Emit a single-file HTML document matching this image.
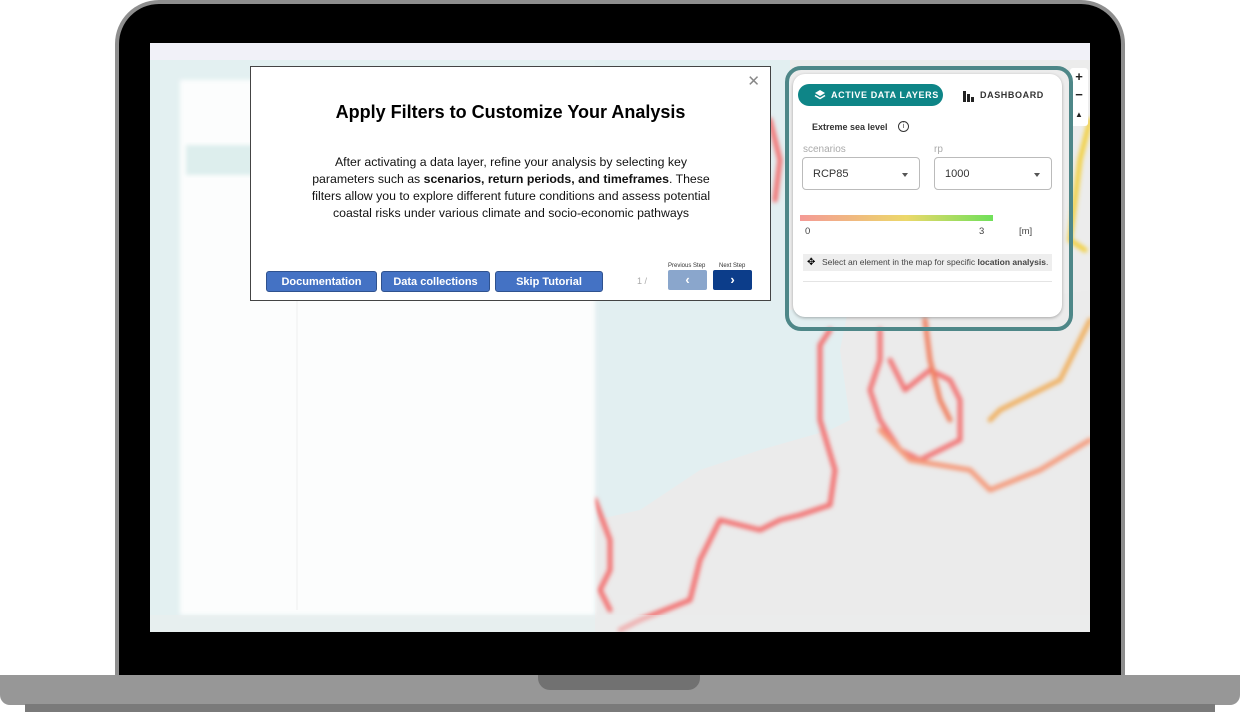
<!DOCTYPE html>
<html><head><meta charset="utf-8"><style>
*{margin:0;padding:0;box-sizing:border-box}
body{width:1240px;height:712px;background:#fff;position:relative;overflow:hidden;font-family:"Liberation Sans",sans-serif}
.abs{position:absolute}
.frame{left:115px;top:0;width:1010px;height:690px;background:#8e8e8e;border-radius:44px 44px 0 0}
.bezel{left:119px;top:4px;width:1002px;height:686px;background:#000;border-radius:40px 40px 0 0}
.screen{left:150px;top:43px;width:940px;height:589px;background:#e3f0f1;overflow:hidden}
.base{left:0;top:675px;width:1240px;height:30px;background:#979797;border-radius:0 0 10px 10px}
.base2{left:25px;top:704px;width:1190px;height:8px;background:#7a7a7a}
.notch{left:538px;top:675px;width:162px;height:15px;background:#717171;border-radius:0 0 12px 12px}
.modal{left:250px;top:66px;width:521px;height:235px;background:#fff;border:1px solid #444}
.btn{position:absolute;top:204px;height:21px;background:#4472c4;border:1px solid #2f528f;border-radius:3px;color:#fff;font-weight:bold;font-size:11px;text-align:center;line-height:21px;font-family:"Liberation Sans",sans-serif}
.panel{left:785px;top:66px;width:288px;height:265px;border:4px solid #4e8788;border-radius:16px}
.card{left:793px;top:74px;width:269px;height:243px;background:#fff;border-radius:12px;box-shadow:0 1px 3px rgba(0,0,0,.3)}
.sel{position:absolute;top:157px;height:33px;border:1px solid #bbb;border-radius:4px;font-size:11px;color:#333;padding:10px 0 0 10px}
.sel:after{content:"";position:absolute;right:11px;top:15px;border:3.5px solid transparent;border-top:4px solid #555}
</style></head><body>
<div class="abs frame"></div>
<div class="abs bezel"></div>
<div class="abs screen">
  <div class="abs" style="left:0;top:0;width:940px;height:17px;background:#f1f1f8"></div>
  <svg class="abs" style="left:0;top:0" width="940" height="589" viewBox="150 43 940 589">
    <defs><filter id="b" x="-10%" y="-10%" width="120%" height="120%"><feGaussianBlur stdDeviation="2"/></filter></defs>
    <rect x="595" y="60" width="495" height="572" fill="#e2eff1"/>
    <path d="M595 520 L640 510 L700 470 L760 450 L830 430 L850 420 L840 350 L850 300 L900 290 L980 300 L1000 280 L1090 270 L1090 632 L595 632Z" fill="#ebebeb"/>
    <path d="M880 300 L960 290 L1020 300 L1090 290 L1090 60 L790 60 L790 310Z" fill="#ececec"/>
    <g fill="none" stroke-width="5" filter="url(#b)" stroke-linecap="round" stroke-linejoin="round">
      <path d="M830 330 L820 345 L820 420 L835 470 L830 505 L800 515 L780 520 L760 530 L720 520 L700 560 L690 600 L640 620 L620 630" stroke="#f37070"/>
      <path d="M595 500 L610 540 L610 570 L600 590 L610 610" stroke="#f37070"/>
      <path d="M880 330 L880 360 L870 390 L880 420 L900 450 L920 460 L960 440 L960 400 L950 380 L930 370 L905 390 L890 360" stroke="#f27575"/>
      <path d="M880 430 L910 460 L970 470 L990 490 L1040 470 L1090 440" stroke="#f59a7a"/>
      <path d="M925 320 L930 360 L940 400 L950 420" stroke="#f08060"/>
      <path d="M1090 320 L1060 380 L1040 390 L1000 410 L990 420" stroke="#f0b060"/>
      <path d="M1090 120 L1080 160 L1070 240 L1085 250" stroke="#f2d040"/>
      <path d="M770 120 L780 160 L775 200" stroke="#f37070"/>
    </g>
    <rect x="180" y="80" width="415" height="535" fill="#fcfdfd" filter="url(#b)"/>
    <rect x="186" y="145" width="100" height="30" fill="#ddeeed" filter="url(#b)"/>
    <line x1="297" y1="95" x2="297" y2="610" stroke="#eeeeee"/>
  </svg>
  <div class="abs" style="left:0;top:572px;width:940px;height:17px;background:rgba(235,238,238,.5)"></div>
</div>

<div class="abs modal">
  <div class="abs" style="right:10px;top:5px;font-size:15px;color:#888">✕</div>
  <div class="abs" style="left:0;width:519px;top:35px;text-align:center;font-size:18px;font-weight:bold;color:#000">Apply Filters to Customize Your Analysis</div>
  <div class="abs" style="left:38px;width:444px;top:87px;text-align:center;font-size:12.3px;line-height:17px;color:#111">After activating a data layer, refine your analysis by selecting key<br>parameters such as <b>scenarios, return periods, and timeframes</b>. These<br>filters allow you to explore different future conditions and assess potential<br>coastal risks under various climate and socio-economic pathways</div>
  <div class="btn" style="left:15px;width:111px">Documentation</div>
  <div class="btn" style="left:130px;width:109px">Data collections</div>
  <div class="btn" style="left:244px;width:108px">Skip Tutorial</div>
  <div class="abs" style="left:386px;top:209px;font-size:9px;color:#aaa">1 /</div>
  <div class="abs" style="left:417px;top:196px;font-size:6px;color:#333">Previous Step</div>
  <div class="abs" style="left:468px;top:196px;font-size:6px;color:#333">Next Step</div>
  <div class="abs" style="left:417px;top:203px;width:39px;height:20px;background:#8aa6cc;border-radius:2px;color:#fff;text-align:center;font-size:13px;font-weight:bold;line-height:19px">‹</div>
  <div class="abs" style="left:462px;top:203px;width:39px;height:20px;background:#0c3d8a;border-radius:2px;color:#fff;text-align:center;font-size:13px;font-weight:bold;line-height:19px">›</div>
</div>

<div class="abs" style="left:1070px;top:68px;width:18px;height:58px;background:#fff;border-radius:3px;font-size:13px;text-align:center;line-height:18px;color:#222;font-weight:bold">+<br>−<br><span style="font-size:8px">▲</span></div>
<div class="abs panel"></div>
<div class="abs card">
  <div class="abs" style="left:5px;top:10px;width:145px;height:22px;background:#0e8587;border-radius:11px;color:#fff;font-size:9px;font-weight:bold;letter-spacing:.6px;line-height:22px;padding-left:33px">ACTIVE DATA LAYERS</div>
  <svg class="abs" style="left:21px;top:15px" width="12" height="12" viewBox="0 0 12 12"><path d="M6 1L11 4L6 7L1 4Z" fill="#fff"/><path d="M1 6.5L6 9.5L11 6.5" stroke="#fff" stroke-width="1.5" fill="none"/></svg>
  <svg class="abs" style="left:169px;top:15px" width="13" height="13" viewBox="0 0 13 13"><rect x="1" y="2" width="3" height="11" fill="#222"/><rect x="5" y="5" width="3" height="8" fill="#222"/><rect x="9" y="8" width="3" height="5" fill="#222"/></svg>
  <div class="abs" style="left:187px;top:16px;font-size:9px;font-weight:bold;letter-spacing:.6px;color:#333">DASHBOARD</div>
  <div class="abs" style="left:19px;top:48px;font-size:9px;font-weight:bold;color:#333">Extreme sea level</div>
  <div class="abs" style="left:105px;top:47px;width:11px;height:11px;border:1.2px solid #333;border-radius:50%;font-size:7px;text-align:center;line-height:9px;color:#333">i</div>
  <div class="abs" style="left:10px;top:70px;font-size:10px;color:#aaa">scenarios</div>
  <div class="abs" style="left:141px;top:70px;font-size:10px;color:#aaa">rp</div>
  <div class="sel" style="left:9px;width:118px;top:83px">RCP85</div>
  <div class="sel" style="left:141px;width:118px;top:83px">1000</div>
  <div class="abs" style="left:7px;top:141px;width:193px;height:6px;background:linear-gradient(90deg,#f49a96,#ecd86a 55%,#6fe05a)"></div>
  <div class="abs" style="left:12px;top:152px;font-size:9.5px;color:#444">0</div>
  <div class="abs" style="left:186px;top:152px;font-size:9.5px;color:#444">3</div>
  <div class="abs" style="left:226px;top:152px;font-size:9.5px;color:#444">[m]</div>
  <div class="abs" style="left:10px;top:180px;width:249px;height:17px;background:#eee;font-size:8.5px;color:#444;line-height:17px;padding-left:19px">Select an element in the map for specific <b>location analysis</b>.</div>
  <div class="abs" style="left:14px;top:183px;font-size:10px">✥</div>
  <div class="abs" style="left:10px;top:207px;width:249px;height:1px;background:#e4e4e4"></div>
</div>

<div class="abs base"></div>
<div class="abs base2"></div>
<div class="abs notch"></div>
</body></html>
